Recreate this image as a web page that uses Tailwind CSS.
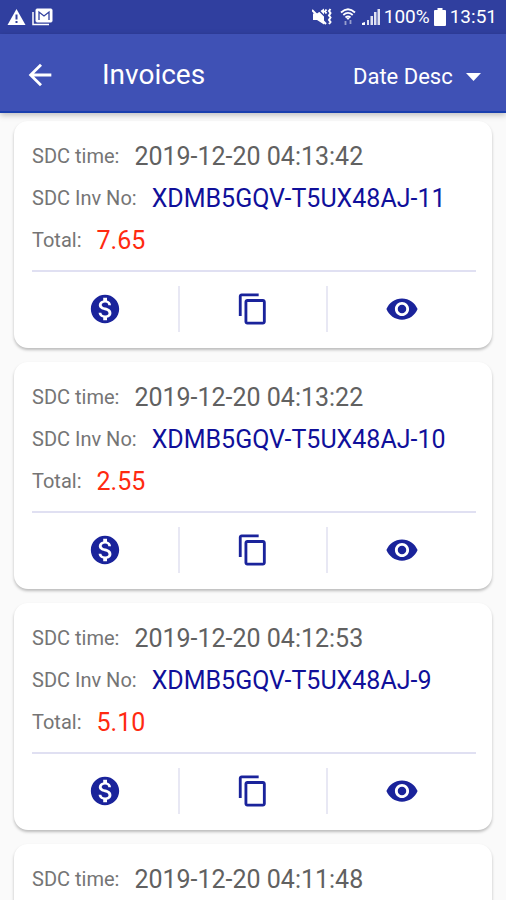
<!DOCTYPE html>
<html lang="en">
<head>
  <meta charset="UTF-8">
  <meta name="viewport" content="width=device-width, initial-scale=1.0">
  <title>Invoices</title>
  <script src="https://cdn.jsdelivr.net/npm/@tailwindcss/browser@4"></script>
</head>
<body class="flex h-screen flex-col overflow-hidden bg-[#fafafa] font-['Roboto',sans-serif]">
  <!-- Status bar -->
  <div class="flex h-[34px] shrink-0 items-center justify-between bg-[#303f9f] pr-[9px] pl-[7px] text-white">
    <div class="flex items-center gap-[6px]">
      <svg class="h-[18px] w-[19px]" viewBox="0 0 19 18" fill="currentColor">
        <path fill-rule="evenodd" d="M9.500 1 18.500 17H.5zM8.500 6.500v5h2v-5zm0 6.500v2h2v-2z"/>
      </svg>
      <svg class="h-[18px] w-[21px]" viewBox="0 0 21 18" fill="none" stroke="currentColor">
        <path d="M1 4v12.500h16" stroke-width="1.500"/>
        <rect x="4" y="1" width="16" height="13" rx="1" fill="currentColor"/>
        <path d="M7 12V4l5 4 5-4v8" stroke="#303f9f" stroke-width="1.300"/>
      </svg>
    </div>
    <div class="flex items-center text-[19px]">
      <svg class="mr-2 h-[18px] w-5" viewBox="0 0 20 18" fill="none" stroke="currentColor">
        <path d="M1 5.500h4l7-5v16l-7-4.500H1z" fill="currentColor" stroke="none"/>
        <path d="M6 1.500l7 7" stroke="#303f9f" stroke-width="1.500"/>
        <path d="M0 2l14 14" stroke-width="2"/>
        <path d="M14.500 1.500l-1.500 2 1.500 2M18.500 1l-1.500 2 1.500 2-1.500 2.500 1.500 2-1.500 2.500 1.500 2-1.500 2" stroke-width="2"/>
      </svg>
      <svg class="mr-[6px] h-[18px] w-4" viewBox="0 0 16 18" fill="none" stroke="currentColor" stroke-width="1.800">
        <path d="M1 4.500q7-6.500 14 0M3.300 7q4.700-4.200 9.400 0M5.500 9.500q2.500-2.200 5 0"/>
        <path d="M6 9.500h4L8 12z" fill="currentColor" stroke="none"/>
        <path d="M5.500 17v-4M10.500 12v4" stroke-opacity=".5"/>
      </svg>
      <svg class="mr-1 h-[18px] w-[18px]" viewBox="0 0 18 18" fill="currentColor">
        <path d="M0 17v-2l3-1v3z"/>
        <path d="M5 12h2v5H5zM8.500 8h2.500v9H8.500zM12 4h2.500v13H12zM15.500 1H18v16h-2.500z" opacity=".85"/>
      </svg>
      <span>100%</span>
      <svg class="mr-1 ml-1 h-[18px] w-3" viewBox="0 0 12 18" fill="currentColor">
        <path d="M3.500 0h5v2H11a1 1 0 0 1 1 1v14a1 1 0 0 1-1 1H1a1 1 0 0 1-1-1V3a1 1 0 0 1 1-1h2.500z"/>
      </svg>
      <span>13:51</span>
    </div>
  </div>

  <!-- App bar -->
  <header class="z-10 flex h-[79px] shrink-0 items-center border-b-2 border-[#1a3fae] bg-[#3f51b5] pt-1 pr-[25px] pl-6 text-white shadow-[0_2px_6px_rgba(0,0,0,0.25)]">
    <button type="button" aria-label="Back" class="flex size-8 items-center justify-center">
      <svg class="size-[34px] shrink-0" viewBox="0 0 24 24" fill="currentColor">
        <path d="M20 11H7.830l5.590-5.590L12 4l-8 8 8 8 1.410-1.410L7.830 13H20v-2z"/>
      </svg>
    </button>
    <h1 class="ml-[46px] text-[28px]">Invoices</h1>
    <div class="ml-auto grid items-center pt-1">
      <select id="sortOrder" aria-label="Sort order" class="col-start-1 row-start-1 appearance-none bg-transparent pr-7 text-[22px]">
        <option>Date Desc</option>
        <option>Date Asc</option>
      </select>
      <svg class="pointer-events-none col-start-1 row-start-1 h-2 w-[15px] justify-self-end" viewBox="0 0 15 8" fill="currentColor">
        <path d="M0 0h15L7.500 8z"/>
      </svg>
    </div>
  </header>

  <main id="invoiceList" class="flex flex-1 flex-col gap-[14px] overflow-y-auto px-[14px] pt-2 pb-4 [scrollbar-width:none]">
    <!-- Invoice cards are inserted here -->
  </main>

  <script>
    const invoices = [
      { time: '2019-12-20 04:13:42', number: 'XDMB5GQV-T5UX48AJ-11', total: '7.65' },
      { time: '2019-12-20 04:13:22', number: 'XDMB5GQV-T5UX48AJ-10', total: '2.55' },
      { time: '2019-12-20 04:12:53', number: 'XDMB5GQV-T5UX48AJ-9', total: '5.10' },
      { time: '2019-12-20 04:11:48', number: 'XDMB5GQV-T5UX48AJ-8', total: '5.10' }
    ];

    const invoiceList = document.getElementById('invoiceList');

    invoices.forEach(invoice => {
      const card = document.createElement('article');
      card.className = 'shrink-0 rounded-[14px] bg-white pr-4 pl-[18px] pt-[14px] pb-4 shadow-[0_2px_3px_rgba(0,0,0,0.25)]';
      card.innerHTML = `
        <dl class="text-xl text-[#757575]">
          <div class="flex h-[42px] items-center gap-[15px]">
            <dt>SDC time:</dt>
            <dd class="text-[25px] text-[#616161]">${invoice.time}</dd>
          </div>
          <div class="flex h-[42px] items-center gap-[15px]">
            <dt>SDC Inv No:</dt>
            <dd class="text-[25px] text-[#10109a]">${invoice.number}</dd>
          </div>
          <div class="flex h-[42px] items-center gap-[15px]">
            <dt>Total:</dt>
            <dd class="text-[25px] text-[#ff2a10]">${invoice.total}</dd>
          </div>
        </dl>
        <div class="mt-[9px] grid grid-cols-3 divide-x-2 divide-[#e8e8f4] border-t-2 border-[#e0e0f2] pt-[14px] text-[#1a239b]">
          <button type="button" aria-label="Payment" class="flex h-[46px] items-center justify-center">
            <svg class="size-[34px]" viewBox="0 0 24 24" fill="currentColor">
              <path d="M12 2C6.480 2 2 6.480 2 12s4.480 10 10 10 10-4.480 10-10S17.520 2 12 2zm1.410 16.090V20h-2.670v-1.930c-1.710-.36-3.160-1.460-3.270-3.400h1.960c.1 1.050.82 1.870 2.650 1.870 1.960 0 2.400-.98 2.400-1.590 0-.83-.44-1.610-2.670-2.140-2.480-.6-4.180-1.620-4.180-3.670 0-1.720 1.390-2.840 3.110-3.210V4h2.670v1.950c1.860.45 2.790 1.860 2.850 3.390H14.300c-.05-1.110-.64-1.870-2.220-1.870-1.500 0-2.400.68-2.400 1.640 0 .84.65 1.390 2.670 1.910s4.180 1.390 4.180 3.910c-.01 1.830-1.380 2.830-3.120 3.160z"/>
            </svg>
          </button>
          <button type="button" aria-label="Copy" class="flex h-[46px] items-center justify-center">
            <svg class="size-[34px]" viewBox="0 0 24 24" fill="currentColor">
              <path d="M16 1H4c-1.100 0-2 .9-2 2v14h2V3h12V1zm3 4H8c-1.100 0-2 .9-2 2v14c0 1.100.9 2 2 2h11c1.100 0 2-.9 2-2V7c0-1.100-.9-2-2-2zm0 16H8V7h11v14z"/>
            </svg>
          </button>
          <button type="button" aria-label="View" class="flex h-[46px] items-center justify-center">
            <svg class="size-[34px]" viewBox="0 0 24 24" fill="currentColor">
              <path d="M12 4.500C7 4.500 2.730 7.610 1 12c1.730 4.390 6 7.500 11 7.500s9.270-3.110 11-7.500c-1.730-4.390-6-7.500-11-7.500zM12 17c-2.760 0-5-2.240-5-5s2.240-5 5-5 5 2.240 5 5-2.240 5-5 5zm0-8c-1.660 0-3 1.340-3 3s1.340 3 3 3 3-1.340 3-3-1.340-3-3-3z"/>
            </svg>
          </button>
        </div>
      `;
      invoiceList.appendChild(card);
    });
  </script>
</body>
</html>
